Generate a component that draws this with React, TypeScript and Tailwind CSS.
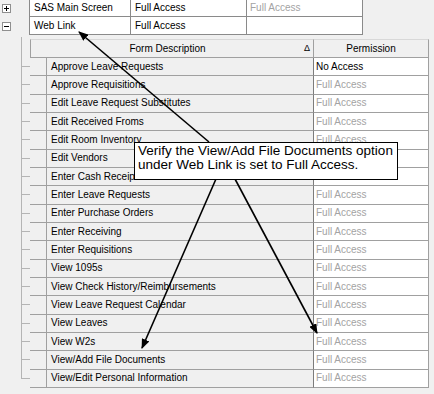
import React from "react";

const rows: [string, string][] = [
  ["Approve Leave Requests", "No Access"],
  ["Approve Requisitions", "Full Access"],
  ["Edit Leave Request Substitutes", "Full Access"],
  ["Edit Received Froms", "Full Access"],
  ["Edit Room Inventory", "Full Access"],
  ["Edit Vendors", "Full Access"],
  ["Enter Cash Receipts", "Full Access"],
  ["Enter Leave Requests", "Full Access"],
  ["Enter Purchase Orders", "Full Access"],
  ["Enter Receiving", "Full Access"],
  ["Enter Requisitions", "Full Access"],
  ["View 1095s", "Full Access"],
  ["View Check History/Reimbursements", "Full Access"],
  ["View Leave Request Calendar", "Full Access"],
  ["View Leaves", "Full Access"],
  ["View W2s", "Full Access"],
  ["View/Add File Documents", "Full Access"],
  ["View/Edit Personal Information", "Full Access"],
];

function ExpandBox({ plus }: { plus?: boolean }) {
  return (
    <svg width="9" height="9" viewBox="0 0 9 9">
      <rect x="0.5" y="0.5" width="8" height="8" fill="#ffffff" stroke="#8f8f8f" />
      <line x1="2" y1="4.5" x2="7" y2="4.5" stroke="#000" />
      {plus && <line x1="4.5" y1="2" x2="4.5" y2="7" stroke="#000" />}
    </svg>
  );
}

function TopRow({ a, b, c }: { a: string; b: string; c: string }) {
  return (
    <div className="flex h-[18px] border-b border-[#8a8a8a]">
      <div className="w-[101px] border-r border-[#8a8a8a] bg-white pl-[4px] flex items-center">{a}</div>
      <div className="w-[116px] border-r border-[#8a8a8a] bg-white pl-[4px] flex items-center">{b}</div>
      <div className="w-[116px] border-r border-[#8a8a8a] bg-white pl-[3px] flex items-center text-[#a3a3a3]">{c}</div>
    </div>
  );
}

function Gutter({ last }: { last?: boolean }) {
  return (
    <div className="w-[30px] flex flex-col">
      <div className="ml-[21px] w-[9px] h-1/2 border-l border-b border-[#b4b4b4]" />
      {!last && <div className="ml-[21px] h-1/2 border-l border-[#b4b4b4]" />}
    </div>
  );
}

export default function App() {
  return (
    <div className="relative w-[434px] h-[394px] overflow-hidden bg-[#f0f0f0] text-[10px] leading-none text-black font-['Liberation_Sans',Arial,sans-serif]">
      {/* top grid */}
      <div className="flex -mt-px">
        <div className="w-[29px] flex flex-col">
          <div className="h-[18px] flex items-center pl-[2px]">
            <ExpandBox plus />
          </div>
          <div className="h-[18px] flex items-center pl-[2px]">
            <ExpandBox />
          </div>
        </div>
        <div className="flex flex-col border-l border-[#8a8a8a]">
          <TopRow a="SAS Main Screen" b="Full Access" c="Full Access" />
          <TopRow a="Web Link" b="Full Access" c="" />
        </div>
      </div>

      {/* spacer with tree line */}
      <div className="flex h-[4px]">
        <div className="w-[30px]">
          <div className="ml-[21px] mt-[2px] h-[2px] border-l border-[#b4b4b4]" />
        </div>
      </div>

      {/* header */}
      <div className="flex h-[19px]">
        <div className="w-[30px]">
          <div className="ml-[21px] h-full border-l border-[#b4b4b4]" />
        </div>
        <div className="w-[284px] flex items-center border-l border-t border-b border-r border-l-[#a0a0a0] border-t-[#d8d8d8] border-b-[#a0a0a0] border-r-[#a0a0a0] bg-[#f0f0f0]">
          <span className="flex-1 text-center">Form Description</span>
          <span className="mr-[3px] text-[9px]">Δ</span>
        </div>
        <div className="w-[115px] flex items-center justify-center border-t border-b border-r border-t-[#d8d8d8] border-b-[#a0a0a0] border-r-[#a0a0a0] bg-[#f0f0f0]">
          Permission
        </div>
      </div>

      {/* data rows */}
      {rows.map(([desc, perm], i) => (
        <div key={desc} className="flex h-[18.33px]">
          <Gutter last={i === rows.length - 1} />
          <div className="w-[17px] border-b border-r border-[#a0a0a0] bg-[#f0f0f0]" />
          <div className="w-[267px] border-b border-r border-b-[#a0a0a0] border-r-[#7c7c7c] bg-[#f0f0f0] pl-[4px] flex items-center">
            {desc}
          </div>
          <div
            className={
              "w-[115px] border-b border-r border-[#a0a0a0] bg-white pl-[2px] flex items-center " +
              (perm === "No Access" ? "text-black" : "text-[#a3a3a3]")
            }
          >
            {perm}
          </div>
        </div>
      ))}

      {/* arrows */}
      <svg className="absolute inset-0 pointer-events-none" width="434" height="394" viewBox="0 0 434 394">
        <defs>
          <marker id="ah" markerWidth="10" markerHeight="8" refX="9" refY="4" orient="auto" markerUnits="userSpaceOnUse">
            <polygon points="0,0 10,4 0,8" fill="#000" />
          </marker>
        </defs>
        <line x1="209" y1="142" x2="79" y2="32" stroke="#000" strokeWidth="1.6" markerEnd="url(#ah)" />
        <line x1="216" y1="179" x2="142" y2="348" stroke="#000" strokeWidth="1.6" markerEnd="url(#ah)" />
        <line x1="235" y1="179" x2="317" y2="333" stroke="#000" strokeWidth="1.6" markerEnd="url(#ah)" />
      </svg>

      {/* callout */}
      <div className="absolute left-[134px] top-[142px] w-[264px] h-[38px] border border-black bg-white pl-[3px] pt-[1px] text-[13.5px] leading-[14px] text-black">
        <div>Verify the View/Add File Documents option</div>
        <div>under Web Link is set to Full Access.</div>
      </div>
    </div>
  );
}
